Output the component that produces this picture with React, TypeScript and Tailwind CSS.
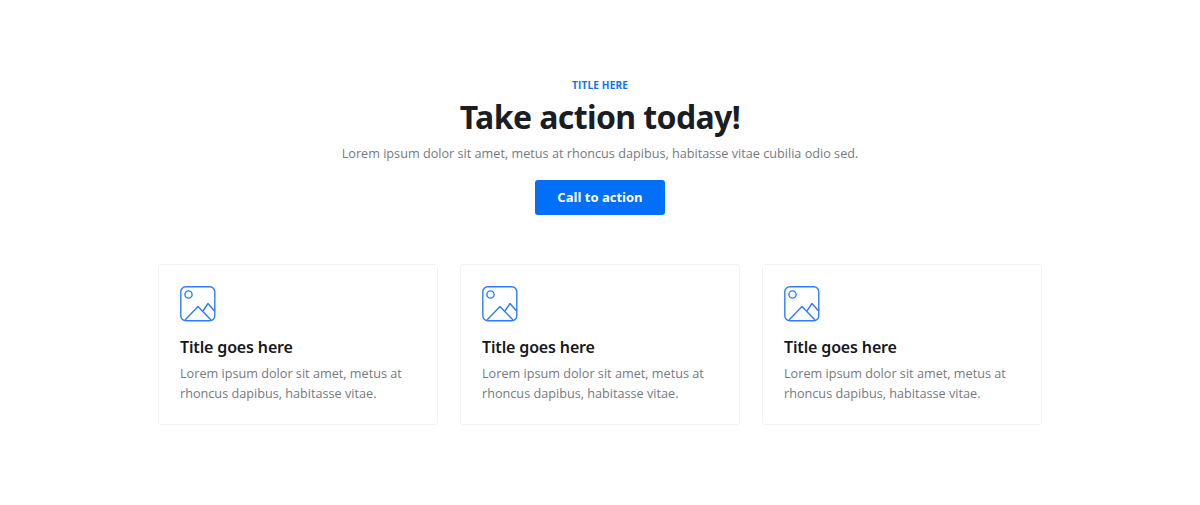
const CARDS = [1, 2, 3];

function ImageIcon() {
  return (
    <svg width="36" height="36" viewBox="0 0 36 36" fill="none" stroke="#2f7dfb" strokeWidth="1.4" strokeLinejoin="round">
      <rect x="0.8" y="0.8" width="34" height="34" rx="5" />
      <circle cx="8.5" cy="8.5" r="3.6" />
      <path d="M5 34 L18 20.5 L31 34" />
      <path d="M23 25 L28 17.5 L34.5 25" />
    </svg>
  );
}

function Card() {
  return (
    <div className="h-[161px] w-[280px] rounded-[3px] border border-[#f3f3f5] bg-white pl-[21px] pt-[21px]">
      <ImageIcon />
      <h3 className="mt-[13px] text-[16px] leading-[24px] font-semibold tracking-[-0.15px] text-[#16181d] font-['Noto_Sans',sans-serif]">
        Title goes here
      </h3>
      <p className="mt-[4px] w-[240px] text-[12.66px] leading-[20px] text-[#77797f]">
        Lorem ipsum dolor sit amet, metus at rhoncus dapibus, habitasse vitae.
      </p>
    </div>
  );
}

export default function App() {
  return (
    <div className="flex h-[505px] flex-col items-center bg-white pt-[78px] font-['Open_Sans',sans-serif]">
      <p className="text-[10px] leading-[14px] font-bold tracking-[0.2px] text-[#0f6fff]">TITLE HERE</p>
      <h1 className="mt-[2px] text-[32px] leading-[46px] font-bold tracking-[-0.6px] text-[#1a1d24] font-['Noto_Sans',sans-serif]">
        Take action today!
      </h1>
      <p className="mt-[2px] text-[12.66px] leading-[22px] text-[#77797f]">
        Lorem ipsum dolor sit amet, metus at rhoncus dapibus, habitasse vitae cubilia odio sed.
      </p>
      <button className="mt-[16px] h-[35px] w-[130px] rounded-[3px] bg-[#0070f9] text-[13px] font-bold text-white">
        Call to action
      </button>
      <div className="mt-[49px] flex gap-[22px]">
        {CARDS.map((c) => (
          <Card key={c} />
        ))}
      </div>
    </div>
  );
}
